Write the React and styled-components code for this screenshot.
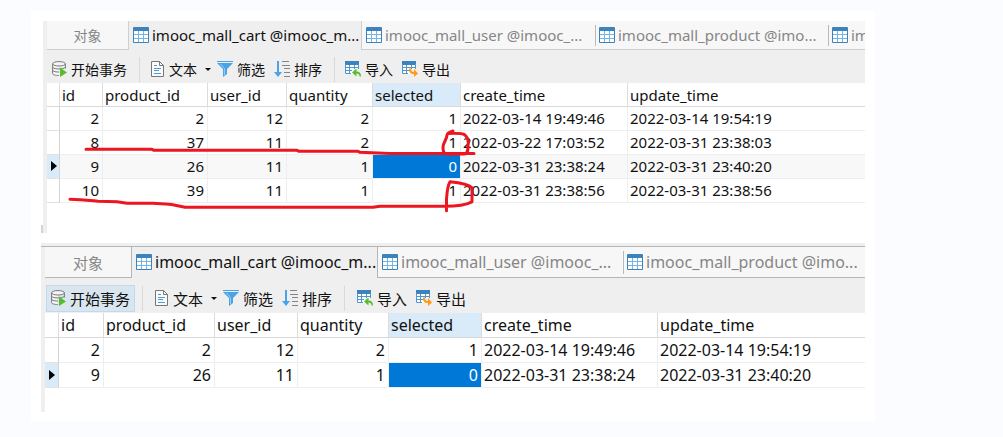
import React from "react";
import styled, { createGlobalStyle, css, ThemeProvider } from "styled-components";

const GlobalStyle = createGlobalStyle`
  *, *::before, *::after { box-sizing: border-box; }
  body {
    margin: 0;
    background: #fafcff;
    color: #111;
    font-family: "Noto Sans", "Noto Sans CJK SC", sans-serif;
  }
  button { font: inherit; color: inherit; border: 0; margin: 0; padding: 0; background: none; }
`;

const compact = {
  text: 15, cjk: 14, tabs: 29, toolbar: 33, row: 24, pad: 2, lift: 2,
  line: "#cfcfcf", rail: 4, current: "#f8f8f8",
  toolPad: 5, toolGap: 4, itemGap: 7, sepBefore: 12, sepAfter: 11, sepEnd: 10,
};
const regular = {
  text: 16, cjk: 15, tabs: 31, toolbar: 35, row: 25, pad: 2, lift: 0,
  line: "#b5b5b5", rail: 4, current: "#ffffff",
  toolPad: 1, toolGap: 4, itemGap: 9, sepBefore: 7, sepAfter: 12, sepEnd: 12,
};

const Card = styled.main`
  display: flex;
  flex-direction: column;
  gap: 10px;
  margin: 11px 128px 15px 31px;
  padding: 10px;
  background: #fff;
`;

const Panel = styled.section`
  position: relative;
  min-width: 0;
  margin-left: ${(p) => p.$inset || 0}px;
  padding-bottom: ${(p) => p.$bottom}px;
  border-left: ${(p) => p.theme.rail}px solid #efefef;
  ${(p) => p.$topped && css`
    &::before {
      content: "";
      display: block;
      height: 4px;
      margin-left: -4px;
      background: #efefef;
      border-bottom: 1px solid ${p.theme.line};
    }
  `}
`;

const RailEnd = styled.span`
  position: absolute;
  left: -6px;
  bottom: 0;
  width: 2px;
  height: 8px;
  background: #d4d4d4;
`;

const TabBar = styled.div`
  display: flex;
  height: ${(p) => p.theme.tabs}px;
  overflow: hidden;
  background: #f7f7f7;
`;

const Tab = styled.button`
  position: relative;
  display: flex;
  flex: ${(p) => (p.$fill ? "1 0" : "0 0")} ${(p) => p.$width}px;
  align-items: center;
  gap: 3px;
  padding-left: 4px;
  color: #868686;
  font-size: ${(p) => p.theme.text}px;
  white-space: nowrap;
  border-bottom: 1px solid ${(p) => p.theme.line};
  ${(p) => p.$home && css`
    justify-content: center;
    padding: 0;
    font-size: ${p.theme.cjk}px;
    border-right: 1px solid ${p.theme.line};
  `}
  ${(p) => p.$active && css`
    color: #111;
    background: #efefef;
    border-bottom-color: #efefef;
  `}
  ${(p) => p.$edge && css`border-left: 1px solid ${p.theme.line};`}
  ${(p) => p.$split && css`
    &::before {
      content: "";
      position: absolute;
      left: 0;
      top: 4px;
      bottom: 3px;
      width: 1px;
      background: #b9b9b9;
    }
  `}
`;

const Toolbar = styled.div`
  display: flex;
  align-items: center;
  height: ${(p) => p.theme.toolbar}px;
  padding: 5px 0 0 ${(p) => p.theme.toolPad}px;
  background: #efefef;
  font-size: ${(p) => p.theme.cjk}px;
`;

const Tool = styled.button`
  display: flex;
  flex: none;
  align-items: center;
  gap: ${(p) => p.theme.toolGap}px;
  height: 27px;
  white-space: nowrap;
  & + & { margin-left: ${(p) => p.theme.itemGap}px; }
  ${(p) => p.$hot && css`
    padding: 0 4px;
    background: #d9e6f0;
    border: 1px solid #bddaf0;
  `}
`;

const Separator = styled.span`
  flex: none;
  width: 1px;
  height: 25px;
  margin: 0 ${(p) => (p.$end ? p.theme.sepEnd : p.theme.sepAfter)}px 0 ${(p) => (p.$end ? 12 : p.theme.sepBefore)}px;
  background: #d9d9d9;
`;

const Caret = styled.span`
  margin: 0 -3px 0 4px;
  border: 3px solid transparent;
  border-top-color: #111;
  border-bottom: 0;
`;

const Grid = styled.table`
  width: 100%;
  table-layout: fixed;
  border-collapse: separate;
  border-spacing: 0;
  background: #fff;
  font-size: ${(p) => p.theme.text}px;
  line-height: 20px;
`;

const Head = styled.th`
  height: ${(p) => p.theme.row}px;
  padding: 0 0 0 ${(p) => p.theme.pad}px;
  text-align: left;
  font-weight: 400;
  border-right: ${(p) => (p.$last ? 0 : 1)}px solid #dcdcdc;
  border-bottom: 1px solid #d9d9d9;
  background: ${(p) => (p.$selected ? "#d9eaf8" : "#fff")};
`;

const Cell = styled.td`
  height: ${(p) => p.theme.row}px;
  padding: 0 ${(p) => (p.$date ? 0 : 3)}px ${(p) => p.theme.lift}px ${(p) => (p.$date ? p.theme.pad : 0)}px;
  text-align: ${(p) => (p.$date ? "left" : "right")};
  white-space: nowrap;
  border-right: ${(p) => (p.$last ? 0 : 1)}px solid #eee;
  border-bottom: 1px solid #eee;
  background: ${(p) => (p.$current ? p.theme.current : "#fff")};
  ${(p) => p.$focus && css`color: #fff; background: #0078d7; background-clip: padding-box;`}
`;

const Marker = styled.td`
  padding: 0 0 ${(p) => p.theme.lift}px 4px;
  border-right: 1px solid #d4d4d4;
  border-bottom: 1px solid #e2e2e2;
  background: ${(p) => (p.$current ? "#d9eaf8" : "#fff")};
`;

const Pointer = styled.span`
  display: block;
  width: 0;
  border: 5px solid transparent;
  border-left: 6px solid #000;
  border-right: 0;
`;

const Icon = styled.svg`
  display: block;
  flex: none;
`;

const Marks = styled.svg`
  position: absolute;
  left: -4px;
  top: 0;
  pointer-events: none;
`;

const TableIcon = () => (
  <Icon width="16" height="16" viewBox="0 0 16 16" aria-hidden="true">
    <rect width="16" height="16" rx="1" fill="#3c82bd" />
    <path d="M1 4h4v3H1zM6 4h4v3H6zM11 4h4v3h-4zM1 8h4v3H1zM6 8h4v3H6zM11 8h4v3h-4zM1 12h4v3H1zM6 12h4v3H6zM11 12h4v3h-4z" fill="#fff" />
    <path d="M1 7.5h14M1 11.5h14M5.5 4v11M10.5 4v11" stroke="#75b5e6" />
  </Icon>
);

const DatabaseIcon = () => (
  <Icon width="15" height="16" viewBox="0 0 15 16" aria-hidden="true">
    <path d="M.6 3v9.5c0 1.3 2.8 2 6.2 2V3z" fill="#f5f5f5" />
    <path d="M.6 3v9.5c0 1.300 2.800 2 6.200 2M13.400 3v4.500" fill="none" stroke="#777" />
    <path d="M.6 6.200c1 1.500 4 1.800 6.500 1.700s5-.3 6.300-1.700M.6 9.400c1 1.300 4 1.700 6.500 1.600" fill="none" stroke="#777" />
    <ellipse cx="7" cy="2.800" rx="6.400" ry="2.200" fill="#f5f5f5" stroke="#777" />
    <path d="M8 6.500 15 11.500l-7 4.500z" fill="#58bd2e" />
  </Icon>
);

const DocumentIcon = () => (
  <Icon width="14" height="16" viewBox="0 0 14 16" aria-hidden="true">
    <path d="M.5.500h8l4 4v11H.5z" fill="#fafafa" stroke="#777" />
    <path d="M8.500.5v4h4" fill="none" stroke="#777" />
    <path d="M3 4.500h3M3 7.500h7M3 9.500h5M3 12.500h7" stroke="#4b9bd8" />
  </Icon>
);

const FilterIcon = () => (
  <Icon width="16" height="16" viewBox="0 0 16 16" aria-hidden="true">
    <path d="M0 .5h16" stroke="#4aa3e6" />
    <path d="M0 2h16l-6 6v5l-4 3V8z" fill="#4aa3e6" />
    <path d="M3.500 3l4 4.500V14" fill="none" stroke="#9bcdf3" />
  </Icon>
);

const SortIcon = () => (
  <Icon width="16" height="16" viewBox="0 0 16 16" aria-hidden="true">
    <path d="M3 0h2v11h3l-4 5-4-5h3z" fill="#4aa3e6" />
    <path d="M8 .5h7M8 4.500h8M10 7.500h6M10 11.500h6M10 15.500h6" stroke="#858585" />
  </Icon>
);

const TransferIcon = ({ out }) => (
  <Icon width="16" height="16" viewBox="0 0 16 16" aria-hidden="true">
    <path d="M0 0h14v4H0z" fill="#3c82bd" />
    <path d="M.5 4h13v4H8v5H.5z" fill="#fff" />
    <path d="M.5 3v9.500H6M.5 6.500h13M.5 9.500H7M4.500 4v8M9.500 4v4M13.500 3v5" fill="none" stroke="#5197cf" />
    {out ? (
      <path d="M7 7.500h2c0 2.500 1 3.500 3 3.500V8l4 4.500-4 3.500v-3c-3.500 0-5.500-2-5-5.500z" fill="#ff9b16" />
    ) : (
      <path d="M16 15.500c0-3.500-1.500-5-4.500-5V7.500L7 11.500l4.500 4v-3c2 0 3 1 3 3z" fill="#58bd2e" />
    )}
  </Icon>
);

const columns = ["id", "product_id", "user_id", "quantity", "selected", "create_time", "update_time"];

const cartRows = [
  [2, 2, 12, 2, 1, "2022-03-14 19:49:46", "2022-03-14 19:54:19"],
  [8, 37, 11, 2, 1, "2022-03-22 17:03:52", "2022-03-31 23:38:03"],
  [9, 26, 11, 1, 0, "2022-03-31 23:38:24", "2022-03-31 23:40:20"],
  [10, 39, 11, 1, 1, "2022-03-31 23:38:56", "2022-03-31 23:38:56"],
];

function DataTabs({ widths, labels }) {
  return (
    <TabBar role="tablist">
      <Tab role="tab" $home $width={widths[0]}>对象</Tab>
      {labels.map((label, i) => (
        <Tab
          key={label}
          role="tab"
          aria-selected={i === 0}
          $active={i === 0}
          $edge={i === 1}
          $split={i > 1}
          $fill={i === labels.length - 1}
          $width={widths[i + 1]}
        >
          <TableIcon />
          {label}
        </Tab>
      ))}
    </TabBar>
  );
}

function DataTools({ hot }) {
  return (
    <Toolbar role="toolbar">
      <Tool $hot={hot}><DatabaseIcon />开始事务</Tool>
      <Separator />
      <Tool><DocumentIcon />文本<Caret /></Tool>
      <Tool><FilterIcon />筛选</Tool>
      <Tool><SortIcon />排序</Tool>
      <Separator $end />
      <Tool><TransferIcon />导入</Tool>
      <Tool><TransferIcon out />导出</Tool>
    </Toolbar>
  );
}

function DataGrid({ widths, rows }) {
  return (
    <Grid>
      <colgroup>
        {widths.map((w, i) => <col key={i} width={w} />)}
        <col />
      </colgroup>
      <thead>
        <tr>
          <Head aria-label="current row" />
          {columns.map((name) => (
            <Head key={name} scope="col" $selected={name === "selected"} $last={name === "update_time"}>{name}</Head>
          ))}
        </tr>
      </thead>
      <tbody>
        {rows.map((row) => {
          const current = row[0] === 9;
          return (
            <tr key={row[0]}>
              <Marker $current={current}>{current && <Pointer />}</Marker>
              {row.map((value, i) => (
                <Cell key={columns[i]} $date={i > 4} $last={i === 6} $current={current} $focus={current && i === 4}>
                  {value}
                </Cell>
              ))}
            </tr>
          );
        })}
      </tbody>
    </Grid>
  );
}

const RedMarks = () => (
  <Marks width="440" height="212" viewBox="43 21 440 212" fill="none" stroke="#ed1520" strokeWidth="3" strokeLinecap="round" strokeLinejoin="round" aria-hidden="true">
    <path d="M86 149.300H152l2 1h143l2 1h59l2 1 30 1.200h84" />
    <path d="M453 131c-3 1-6 2-6 4 0 4-4 8-4 12 0 6 1 7 6 7h15c4 0 4-4 4-8 1-5 0-8-3-11-3-2-9-2-17-1.500" />
    <path d="M70 199.300c10 0 18 1 28 2l19 .5 10 1.500h26c8 .7 15 .6 21 1.700l11 2.300h188l7-1h65c13 0 20-1 27-4.500v-14c-3-3-12-5-22-6-3 5-3 12-3.500 18v11" />
  </Marks>
);

export default function App() {
  return (
    <>
      <GlobalStyle />
      <Card>
        <ThemeProvider theme={compact}>
          <Panel $inset={2} $bottom={30}>
            <DataTabs
              widths={[82, 232, 234, 233, 37]}
              labels={["imooc_mall_cart @imooc_m...", "imooc_mall_user @imooc_...", "imooc_mall_product @imo...", "im"]}
            />
            <DataTools />
            <DataGrid widths={[13, 43, 105, 79, 86, 88, 167]} rows={cartRows} />
            <RailEnd />
            <RedMarks />
          </Panel>
        </ThemeProvider>
        <ThemeProvider theme={regular}>
          <Panel $topped $bottom={24}>
            <DataTabs
              widths={[87, 245, 246, 242]}
              labels={["imooc_mall_cart @imooc_m...", "imooc_mall_user @imooc_...", "imooc_mall_product @imo..."]}
            />
            <DataTools hot />
            <DataGrid widths={[14, 45, 111, 83, 91, 93, 176]} rows={[cartRows[0], cartRows[2]]} />
          </Panel>
        </ThemeProvider>
      </Card>
    </>
  );
}
